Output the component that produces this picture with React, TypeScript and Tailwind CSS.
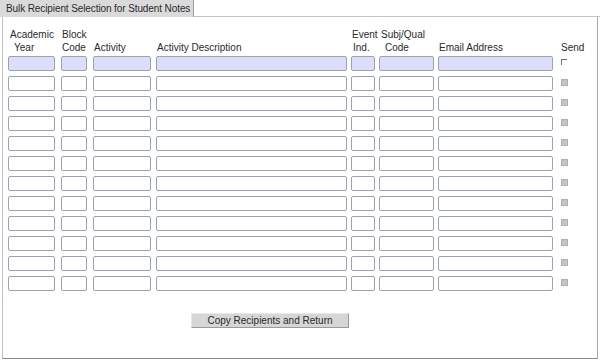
import React from "react";

const cols = [
  { w: 53, iw: 47, h1: "Academic", h2: "Year", p1: 2, p2: 6 },
  { w: 32, iw: 26, h1: "Block", h2: "Code", p1: 1, p2: 1 },
  { w: 63, iw: 58, h1: "", h2: "Activity", p1: 0, p2: 1 },
  { w: 195, iw: 191, h1: "", h2: "Activity Description", p1: 0, p2: 1 },
  { w: 28, iw: 24, h1: "Event", h2: "Ind.", p1: 1, p2: 2 },
  { w: 59, iw: 55, h1: "Subj/Qual", h2: "Code", p1: 2, p2: 6 },
  { w: 122, iw: 115, h1: "", h2: "Email Address", p1: 0, p2: 1 },
];

export default function App() {
  const rows = Array.from({ length: 12 }, (_, i) => i);
  return (
    <div
      className="w-[600px] h-[361px] bg-white text-[#2a2a2a] text-[10px] overflow-hidden"
      style={{ fontFamily: '"Liberation Sans", Arial, sans-serif' }}
    >
      <div className="flex h-[17px]">
        <div className="w-[194px] bg-[#dadada] border-r border-[#9a9a9a] pl-[6px] leading-[17px] whitespace-nowrap overflow-hidden tracking-[-0.1px]">
          Bulk Recipient Selection for Student Notes
        </div>
        <div className="flex-1 border-b border-[#c4c4c4]" />
      </div>
      <div className="ml-[2px] w-[596px] h-[342px] border-l border-r border-b border-l-[#c0c0c0] border-r-[#a8a8a8] border-b-[#8c8c8c] pl-[5px] pt-[11px] flex flex-col">
        <div className="flex h-[26px] leading-[13px]">
          {cols.map((c, i) => (
            <div key={i} className="flex flex-col shrink-0" style={{ width: c.w }}>
              <div className="h-[13px] whitespace-nowrap" style={{ paddingLeft: c.p1 }}>
                {c.h1}
              </div>
              <div className="h-[13px] whitespace-nowrap" style={{ paddingLeft: c.p2 }}>
                {c.h2}
              </div>
            </div>
          ))}
          <div className="flex flex-col">
            <div className="h-[13px]" />
            <div className="h-[13px] pl-[1px]">Send</div>
          </div>
        </div>
        <div className="flex flex-col gap-[5px] mt-[2px]">
          {rows.map((r) => (
            <div key={r} className="flex h-[15px]">
              {cols.map((c, i) => (
                <div key={i} className="shrink-0" style={{ width: c.w }}>
                  <div
                    className={`h-[15px] rounded-[2px] border border-[#9ba3b3] ${
                      r === 0 ? "bg-[#dcdcfb]" : "bg-white"
                    }`}
                    style={{ width: c.iw }}
                  />
                </div>
              ))}
              <div className="pt-[3px] pl-[1px]">
                {r === 0 ? (
                  <div className="w-[6px] h-[6px] border-t border-l border-[#707070]" />
                ) : (
                  <div className="w-[7px] h-[7px] bg-[#c4c4c4] border border-[#b0b0b0]" />
                )}
              </div>
            </div>
          ))}
        </div>
        <div className="flex mt-[22px] pl-[183px]">
          <div className="w-[158px] h-[15px] bg-[#d6d6d6] border-r border-b border-[#9a9a9a] border-t border-l border-t-[#e8e8e8] border-l-[#e8e8e8] text-center leading-[13px] text-[10px]">
            Copy Recipients and Return
          </div>
        </div>
      </div>
    </div>
  );
}
